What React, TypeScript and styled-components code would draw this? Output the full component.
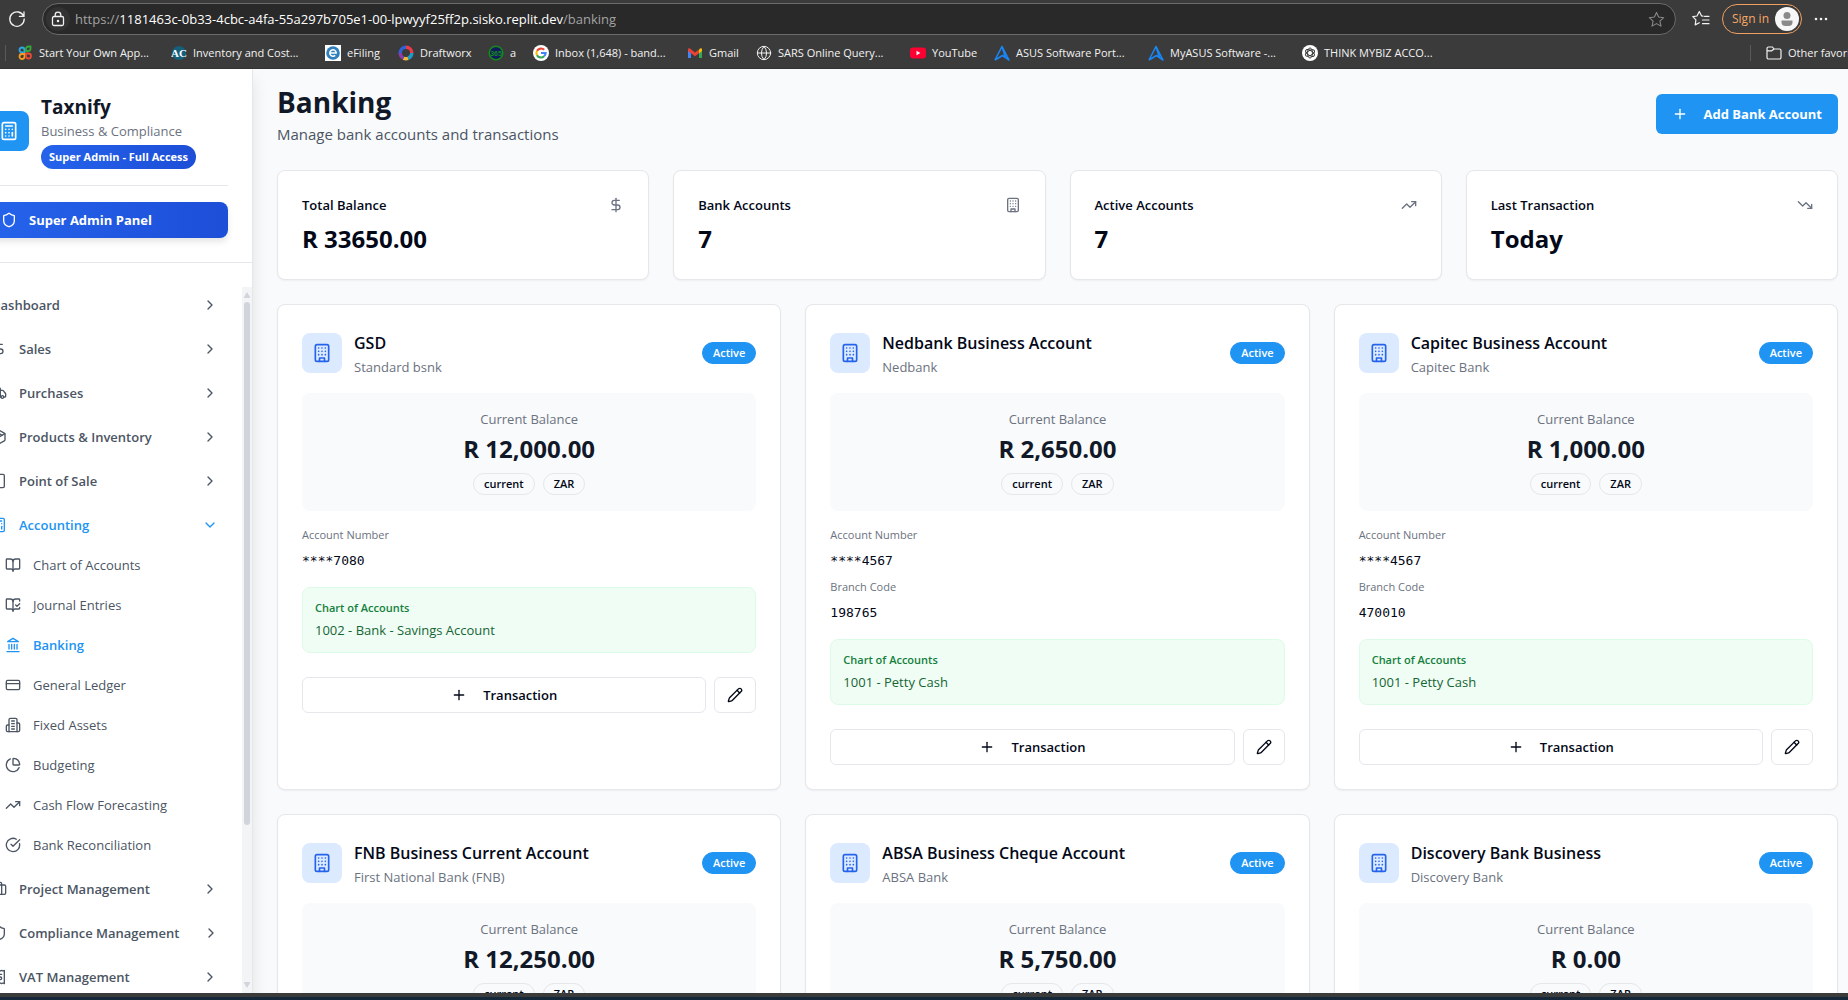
import React from "react";
import styled, { createGlobalStyle, css } from "styled-components";
import {
  BookOpen, BookOpenCheck, Briefcase, Calculator, ChevronDown, ChevronRight, CircleCheckBig,
  CreditCard, DollarSign, Globe, Package, Pencil, PieChart, Plus, Receipt, Shield, Tablet,
  TrendingDown, TrendingUp, Truck,
} from "lucide-react";

const sans = `"Segoe UI", "Open Sans", "Noto Sans", sans-serif`;
const mono = `Consolas, "DejaVu Sans Mono", monospace`;

const GlobalStyle = createGlobalStyle`
  *, *::before, *::after { box-sizing: border-box; }
  html, body { margin: 0; height: 100%; overflow: hidden; }
  #root { height: 100%; }
  body { font-family: ${sans}; font-size: 13px; line-height: 20px; color: #020817; background: #f9fafc; }
  h1, h2, h3, p, ul, dl, dd { margin: 0; padding: 0; }
  ul { list-style: none; }
  button, input { font: inherit; color: inherit; }
  button { cursor: pointer; }
  a { color: inherit; text-decoration: none; }
  svg { flex: none; display: block; }
`;

/* ---------- Browser chrome ---------- */

const Window = styled.div`
  display: flex;
  flex-direction: column;
  height: 100vh;
`;

const Chrome = styled.header`
  flex: none;
  display: flex;
  flex-direction: column;
  background: #3b3b3b;
  color: #f2f2f2;
  border-bottom: 1px solid #333;
`;

const AddressRow = styled.div`
  display: flex;
  align-items: center;
  height: 38px;
  padding: 0 20px 0 8px;
`;

const ChromeButton = styled.button`
  display: flex;
  padding: 0;
  border: 0;
  background: none;
  color: #f2f2f2;
`;

const AddressBar = styled.div`
  flex: 1;
  display: flex;
  align-items: center;
  gap: 5px;
  height: 32px;
  margin: 0 16px;
  padding: 0 10px 0 3px;
  border: 1px solid #6b6b6b;
  border-radius: 16px;
  background: #292929;
  color: #8a8a8a;
`;

const LockBadge = styled.span`
  display: flex;
  align-items: center;
  justify-content: center;
  width: 24px;
  height: 24px;
  border-radius: 12px;
  background: #333;
  color: #f2f2f2;
`;

const Url = styled.a`
  flex: 1;
  font-size: 13px;
  color: #a3a3a3;
  white-space: nowrap;
`;

const Host = styled.span`
  color: #fff;
`;

const SignIn = styled.button`
  display: flex;
  align-items: center;
  gap: 6px;
  height: 30px;
  margin: 0 12px 0 12px;
  padding: 0 2px 0 9px;
  border: 1px solid #f0a060;
  border-radius: 15px;
  background: none;
  color: #f5a768;
  font-size: 12px;
`;

const Bookmarks = styled.nav`
  display: flex;
  align-items: center;
  height: 30px;
  padding: 0 0 0 5px;
  font-size: 11px;
  white-space: nowrap;
`;

const Rule = styled.span`
  width: 1px;
  height: 16px;
  background: #5a5a5a;
`;

const Bookmark = styled.a<{ $width?: number }>`
  flex: none;
  display: flex;
  align-items: center;
  gap: 6px;
  width: ${(p) => (p.$width ? `${p.$width}px` : "auto")};
`;

const BookmarkSpacer = styled.span`
  width: 11px;
`;

const OtherFavorites = styled(Bookmark)`
  width: 82px;
  margin-left: 15px;
  overflow: hidden;
`;

const Fill = styled.span`
  flex: 1;
`;

/* ---------- Page shell ---------- */

const Page = styled.div`
  flex: 1;
  min-height: 0;
  display: flex;
  overflow: hidden;
`;

const Taskbar = styled.footer`
  flex: none;
  height: 7px;
  background: #14283a;
  border-top: 4px solid #3b3b3b;
`;

const Sidebar = styled.aside`
  flex: none;
  display: flex;
  flex-direction: column;
  width: 288px;
  margin-left: -35px;
  border-right: 1px solid #e5e7eb;
  background: #fff;
  box-shadow: 0 10px 15px rgba(0, 0, 0, 0.1);
`;

const SidebarTop = styled.div`
  flex: none;
  padding: 24px;
  border-bottom: 1px solid #e5e7eb;
`;

const Brand = styled.div`
  display: flex;
  align-items: center;
  gap: 12px;
  padding-bottom: 16px;
  border-bottom: 1px solid #e5e7eb;
`;

const BrandTile = styled.span`
  display: flex;
  align-items: center;
  justify-content: center;
  width: 40px;
  height: 40px;
  border-radius: 8px;
  background: #2094f3;
  color: #fff;
`;

const BrandBody = styled.div`
  display: flex;
  flex-direction: column;
  align-items: flex-start;
`;

const BrandName = styled.h2`
  font-size: 19px;
  line-height: 28px;
  font-weight: 700;
  color: #111827;
`;

const BrandText = styled.p`
  color: #6b7280;
`;

const RoleBadge = styled.span`
  margin-top: 4px;
  padding: 4px 8px;
  border-radius: 12px;
  background: linear-gradient(90deg, #2563eb, #1d4ed8);
  color: #fff;
  font-size: 11px;
  line-height: 16px;
  font-weight: 700;
`;

const AdminButton = styled.button`
  display: flex;
  align-items: center;
  gap: 12px;
  width: 100%;
  height: 36px;
  margin-top: 16px;
  padding: 0 12px;
  border: 0;
  border-radius: 8px;
  background: linear-gradient(90deg, #2563eb, #1d4ed8);
  box-shadow: 0 4px 6px rgba(0, 0, 0, 0.1);
  color: #fff;
  font-weight: 700;
`;

const NavScroll = styled.div`
  flex: 1;
  min-height: 0;
  display: flex;
  margin-top: 24px;
`;

const Nav = styled.nav`
  flex: 1;
  display: flex;
  flex-direction: column;
  gap: 8px;
  padding: 0 12px 0 14px;
  overflow: hidden;
`;

const row = css<{ $active?: boolean }>`
  display: flex;
  align-items: center;
  gap: 12px;
  flex: none;
  width: 100%;
  height: 36px;
  border: 0;
  background: none;
  text-align: left;
  white-space: nowrap;
  color: ${(p) => (p.$active ? "#2094f3" : "#4b5563")};
`;

const GroupButton = styled.button<{ $active?: boolean }>`
  ${row}
  padding: 0 12px;
  font-weight: 600;
`;

const SubList = styled.ul`
  display: flex;
  flex-direction: column;
  gap: 4px;
  margin-top: 4px;
`;

const SubLink = styled.a<{ $active?: boolean }>`
  ${row}
  padding: 0 12px 0 26px;
  font-weight: ${(p) => (p.$active ? 600 : 400)};
`;

const ScrollTrack = styled.div`
  flex: none;
  display: flex;
  flex-direction: column;
  align-items: center;
  gap: 4px;
  width: 10px;
  padding: 5px 0;
  background: #f3f4f6;
  color: #d1d5db;
`;

const ScrollThumb = styled.span`
  flex: 526 0 0;
  width: 6px;
  border-radius: 3px;
  background: #d1d5db;
`;

const ScrollRest = styled.span`
  flex: 150 0 0;
`;

/* ---------- Main content ---------- */

const Main = styled.main`
  flex: 1;
  min-width: 0;
  display: flex;
  flex-direction: column;
  gap: 24px;
  padding: 13px 10px 0 24px;
  overflow: hidden;
`;

const PageHeader = styled.div`
  display: flex;
  align-items: center;
  justify-content: space-between;
`;

const PageTitle = styled.h1`
  font-size: 28px;
  line-height: 40px;
  font-weight: 700;
  color: #111827;
`;

const PageText = styled.p`
  font-size: 15px;
  line-height: 24px;
  color: #4b5563;
`;

const AddButton = styled.button`
  display: flex;
  align-items: center;
  gap: 16px;
  height: 40px;
  padding: 0 16px;
  border: 0;
  border-radius: 6px;
  background: #2094f3;
  color: #fff;
  font-weight: 700;
`;

const StatGrid = styled.section`
  flex: none;
  display: grid;
  grid-template-columns: repeat(4, 1fr);
  gap: 24px;
`;

const card = css`
  border: 1px solid #e5e7eb;
  border-radius: 8px;
  background: #fff;
  box-shadow: 0 1px 2px rgba(0, 0, 0, 0.05);
`;

const StatCard = styled.article`
  ${card}
  padding: 24px;
`;

const StatHead = styled.div`
  display: flex;
  align-items: center;
  justify-content: space-between;
  color: #6b7280;
`;

const StatLabel = styled.h3`
  font-size: 13px;
  line-height: 20px;
  font-weight: 600;
  color: #020817;
`;

const StatValue = styled.p`
  margin-top: 8px;
  font-size: 24px;
  line-height: 32px;
  font-weight: 700;
`;

const AccountGrid = styled.section`
  flex: none;
  display: grid;
  grid-template-columns: repeat(3, 1fr);
  gap: 24px;
`;

const AccountCard = styled.article`
  ${card}
  display: flex;
  flex-direction: column;
  gap: 16px;
  padding: 24px;
`;

const AccountHead = styled.div`
  display: flex;
  align-items: center;
  gap: 12px;
`;

const AccountTile = styled.span`
  display: flex;
  align-items: center;
  justify-content: center;
  width: 40px;
  height: 40px;
  border-radius: 8px;
  background: #dbeafe;
  color: #2563eb;
`;

const AccountNames = styled.div`
  flex: 1;
  min-width: 0;
`;

const AccountName = styled.h3`
  font-size: 16px;
  line-height: 28px;
  font-weight: 600;
`;

const Muted = styled.p`
  color: #6b7280;
`;

const Pill = styled.span<{ $solid?: boolean }>`
  padding: 2px 10px;
  border: 1px solid ${(p) => (p.$solid ? "#2094f3" : "#e5e7eb")};
  border-radius: 11px;
  background: ${(p) => (p.$solid ? "#2094f3" : "transparent")};
  color: ${(p) => (p.$solid ? "#fff" : "#020817")};
  font-size: 11px;
  line-height: 16px;
  font-weight: 600;
`;

const BalanceBox = styled.div`
  display: flex;
  flex-direction: column;
  align-items: center;
  padding: 16px;
  border-radius: 8px;
  background: #f9fafb;
`;

const Balance = styled.p`
  margin-top: 4px;
  font-size: 24px;
  line-height: 32px;
  font-weight: 700;
  color: #111827;
`;

const Pills = styled.div`
  display: flex;
  gap: 8px;
  margin-top: 8px;
`;

const Details = styled.dl`
  display: flex;
  flex-direction: column;
  gap: 8px;
`;

const Term = styled.dt`
  font-size: 11px;
  line-height: 16px;
  color: #6b7280;
`;

const Code = styled.dd`
  font-family: ${mono};
  font-size: 13px;
  line-height: 20px;
`;

const LedgerBox = styled.div`
  display: flex;
  flex-direction: column;
  gap: 4px;
  padding: 12px;
  border: 1px solid #dcfce7;
  border-radius: 8px;
  background: #f0fdf4;
`;

const LedgerTitle = styled.p`
  font-size: 11px;
  line-height: 16px;
  font-weight: 600;
  color: #15803d;
`;

const LedgerText = styled.p`
  color: #166534;
`;

const Actions = styled.div`
  display: flex;
  gap: 8px;
  margin-top: 8px;
`;

const OutlineButton = styled.button<{ $grow?: boolean }>`
  flex: ${(p) => (p.$grow ? "1" : "none")};
  display: flex;
  align-items: center;
  justify-content: center;
  gap: 16px;
  height: 36px;
  padding: 0 12px;
  border: 1px solid #e5e7eb;
  border-radius: 6px;
  background: #fff;
  font-weight: 600;
`;

/* ---------- Drawings ---------- */

const Stroke = ({ size = 16, children }: { size?: number; children: React.ReactNode }) => (
  <svg width={size} height={size} viewBox="0 0 24 24" fill="none" stroke="currentColor" strokeWidth="2"
    strokeLinecap="round" strokeLinejoin="round" aria-hidden="true">{children}</svg>
);

const BuildingIcon = ({ size = 16 }: { size?: number }) => (
  <Stroke size={size}>
    <rect x="4" y="2" width="16" height="20" rx="2" />
    <path d="M9 22v-4h6v4M8 6h.01M16 6h.01M12 6h.01M12 10h.01M12 14h.01M16 10h.01M16 14h.01M8 10h.01M8 14h.01" />
  </Stroke>
);

const OfficeIcon = () => (
  <Stroke>
    <path d="M6 22V4a2 2 0 0 1 2-2h8a2 2 0 0 1 2 2v18Z" />
    <path d="M6 12H4a2 2 0 0 0-2 2v6a2 2 0 0 0 2 2h2M18 9h2a2 2 0 0 1 2 2v9a2 2 0 0 1-2 2h-2M10 6h4M10 10h4M10 14h4M10 18h4" />
  </Stroke>
);

const LandmarkIcon = () => (
  <Stroke>
    <path d="M3 22h18M6 18v-7M10 18v-7M14 18v-7M18 18v-7M12 2l8 5H4z" />
  </Stroke>
);

const ReloadIcon = () => (
  <svg width="18" height="18" viewBox="0 0 18 18" fill="none" stroke="currentColor" strokeWidth="1.3" strokeLinecap="round" aria-hidden="true">
    <path d="M15.6 6.2A7.2 7.2 0 1 0 16.2 9M16 1.8v4.6h-4.6" />
  </svg>
);

const LockIcon = () => (
  <svg width="16" height="16" viewBox="0 0 16 16" fill="none" stroke="currentColor" strokeWidth="1.3" aria-hidden="true">
    <rect x="2.5" y="5.5" width="11" height="9" rx="1.5" />
    <path d="M5.2 5.5V4a2.8 2.8 0 0 1 5.6 0v1.5" />
    <circle cx="8" cy="10" r=".6" fill="currentColor" />
  </svg>
);

const StarIcon = () => (
  <svg width="17" height="17" viewBox="0 0 24 24" fill="none" stroke="currentColor" strokeWidth="1.5" strokeLinejoin="round" aria-hidden="true">
    <path d="m12 2 3 6.600 7.200.8-5.400 4.900 1.500 7.100L12 17.800l-6.300 3.600 1.500-7.100L1.800 9.400 9 8.600z" />
  </svg>
);

const FavoritesIcon = () => (
  <svg width="18" height="18" viewBox="0 0 18 18" fill="none" stroke="currentColor" strokeWidth="1.2" strokeLinejoin="round" strokeLinecap="round" aria-hidden="true">
    <path d="M11 6.200 9.600 6 7.300 1.500 5 6 .8 6.700l3.100 3.200-.7 5 4.100-2.200M12.500 6.300h4.500M10.500 10h6.500M10.500 13.700h6.500" />
  </svg>
);

const AvatarIcon = () => (
  <svg width="24" height="24" viewBox="0 0 24 24" aria-hidden="true">
    <circle cx="12" cy="12" r="12" fill="#f7f7f7" />
    <circle cx="12" cy="8.500" r="3.500" fill="#8a8a8a" />
    <path d="M6.500 13.500h11v1.500a4 4 0 0 1-4 4h-3a4 4 0 0 1-4-4z" fill="#8a8a8a" />
  </svg>
);

const DotsIcon = () => (
  <svg width="14" height="4" viewBox="0 0 14 4" fill="currentColor" aria-hidden="true">
    <circle cx="2" cy="2" r="1.300" /><circle cx="7" cy="2" r="1.300" /><circle cx="12" cy="2" r="1.300" />
  </svg>
);

const FolderIcon = () => (
  <svg width="16" height="16" viewBox="0 0 16 16" fill="none" stroke="currentColor" strokeWidth="1.200" strokeLinejoin="round" aria-hidden="true">
    <path d="M1 4.500v8A1.500 1.500 0 0 0 2.500 14h11a1.500 1.500 0 0 0 1.500-1.500v-7A1.500 1.500 0 0 0 13.500 4H8L6.500 2h-4A1.500 1.500 0 0 0 1 3.500zM1 5.800h4.800L8 4" />
  </svg>
);

const Fav = ({ children }: { children: React.ReactNode }) => (
  <svg width="16" height="16" viewBox="0 0 16 16" aria-hidden="true">{children}</svg>
);

const CloverFav = () => (
  <Fav>
    <g fill="none" strokeWidth="1.800">
      <path d="M7.500 7.500H5A2.500 2.500 0 1 1 7.500 5z" stroke="#2da8e0" />
      <path d="M9 6V4A2.500 2.500 0 0 1 11.500 1.500H13.500v2A2.500 2.500 0 0 1 11 6z" stroke="#35a835" />
      <path d="M7.500 9v2.500A2.500 2.500 0 1 1 5 9z" stroke="#f39a1f" />
      <path d="M9 8.500h2.500A2.500 2.500 0 1 1 9 11z" stroke="#ea4b35" />
    </g>
  </Fav>
);

const AcFav = () => (
  <Fav>
    <circle cx="8" cy="8" r="7" fill="#14607c" />
    <text x="8" y="12" textAnchor="middle" fontFamily="Liberation Serif, serif" fontWeight="700" fontSize="11" fill="#fff">AC</text>
  </Fav>
);

const EFilingFav = () => (
  <Fav>
    <rect width="16" height="16" fill="#fff" />
    <circle cx="8" cy="8" r="6.800" fill="#2f80bd" />
    <path d="M4.800 8h6.400a3.200 3.200 0 1 0-1 2.400" fill="none" stroke="#fff" strokeWidth="1.500" />
  </Fav>
);

const RingFav = () => (
  <Fav>
    <g fill="none" strokeWidth="3.400">
      <path d="M8 2.200A5.800 5.800 0 0 1 13.800 8" stroke="#ee3b4b" />
      <path d="M13.800 8A5.800 5.800 0 0 1 10 13.400" stroke="#1b9dc8" />
      <path d="M10 13.400A5.800 5.800 0 0 1 5.500 13.200" stroke="#f6b93b" />
      <path d="M5.500 13.200A5.800 5.800 0 0 1 2.200 8" stroke="#8a3fa8" />
      <path d="M2.200 8A5.800 5.800 0 0 1 8 2.200" stroke="#2f62d9" />
    </g>
  </Fav>
);

const S365Fav = () => (
  <Fav>
    <circle cx="8" cy="8" r="6.800" fill="#101a5c" stroke="#138a1c" strokeWidth="1.500" />
    <text x="8" y="11" textAnchor="middle" fontFamily="Liberation Sans, sans-serif" fontWeight="700" fontSize="7" fill="#138a1c">365</text>
  </Fav>
);

const GoogleFav = () => (
  <Fav>
    <circle cx="8" cy="8" r="8" fill="#fff" />
    <g fill="none" strokeWidth="2.200">
      <path d="M11.200 4.800A4.600 4.600 0 0 0 4 5.800" stroke="#ea4335" />
      <path d="M4 5.800a4.600 4.600 0 0 0 0 4.400" stroke="#fbbc05" />
      <path d="M4 10.200a4.600 4.600 0 0 0 7.100 1.100" stroke="#34a853" />
      <path d="M11.100 11.300A4.600 4.600 0 0 0 12.600 8H8" stroke="#4285f4" />
    </g>
  </Fav>
);

const GmailFav = () => (
  <Fav>
    <path d="M1 4v9h3V7z" fill="#4285f4" />
    <path d="M15 4v9h-3V7z" fill="#34a853" />
    <path d="M12 4.500 13 3.500q2-.8 2 1V6l-3 2.300z" fill="#fbbc04" />
    <path d="M1 6V4.500q0-1.800 2-1l5 4 4-3v3.800l-4 3z" fill="#ea4335" />
  </Fav>
);

const YouTubeFav = () => (
  <Fav>
    <rect y="2.500" width="16" height="11" rx="3" fill="#ff0033" />
    <path d="M6.500 5.800v4.400L10.300 8z" fill="#fff" />
  </Fav>
);

const AsusFav = () => (
  <Fav>
    <path d="M1 15 8 1.500 15 15 8.500 10.500 1 15M8 1.500l3.500 11" fill="none" stroke="#1a86f5" strokeWidth="1.600" strokeLinejoin="round" />
  </Fav>
);

const KnotFav = () => (
  <Fav>
    <circle cx="8" cy="8" r="8" fill="#fff" />
    <g fill="none" stroke="#333" strokeWidth=".9">
      <ellipse cx="8" cy="8" rx="2.400" ry="5" />
      <ellipse cx="8" cy="8" rx="2.400" ry="5" transform="rotate(60 8 8)" />
      <ellipse cx="8" cy="8" rx="2.400" ry="5" transform="rotate(120 8 8)" />
    </g>
  </Fav>
);

/* ---------- Data ---------- */

const bookmarks: { label: string; icon: React.ReactNode; width: number }[] = [
  { label: "Start Your Own App...", icon: <CloverFav />, width: 154 },
  { label: "Inventory and Cost...", icon: <AcFav />, width: 154 },
  { label: "eFiling", icon: <EFilingFav />, width: 73 },
  { label: "Draftworx", icon: <RingFav />, width: 90 },
  { label: "a", icon: <S365Fav />, width: 45 },
  { label: "Inbox (1,648) - band...", icon: <GoogleFav />, width: 154 },
  { label: "Gmail", icon: <GmailFav />, width: 69 },
  { label: "SARS Online Query...", icon: <Globe size={16} strokeWidth={1.5} />, width: 154 },
  { label: "YouTube", icon: <YouTubeFav />, width: 84 },
  { label: "ASUS Software Port...", icon: <AsusFav />, width: 154 },
  { label: "MyASUS Software -...", icon: <AsusFav />, width: 154 },
  { label: "THINK MYBIZ ACCO...", icon: <KnotFav />, width: 154 },
];

type Group = { label: string; icon?: React.ReactNode; open?: boolean };

const groups: Group[] = [
  { label: "Dashboard" },
  { label: "Sales", icon: <DollarSign size={16} /> },
  { label: "Purchases", icon: <Truck size={16} /> },
  { label: "Products & Inventory", icon: <Package size={16} /> },
  { label: "Point of Sale", icon: <Tablet size={16} /> },
  { label: "Accounting", icon: <Calculator size={16} />, open: true },
  { label: "Project Management", icon: <Briefcase size={16} /> },
  { label: "Compliance Management", icon: <Shield size={16} /> },
  { label: "VAT Management", icon: <Receipt size={16} /> },
];

const accountingLinks = [
  { label: "Chart of Accounts", icon: <BookOpen size={16} /> },
  { label: "Journal Entries", icon: <BookOpenCheck size={16} /> },
  { label: "Banking", icon: <LandmarkIcon />, active: true },
  { label: "General Ledger", icon: <CreditCard size={16} /> },
  { label: "Fixed Assets", icon: <OfficeIcon /> },
  { label: "Budgeting", icon: <PieChart size={16} /> },
  { label: "Cash Flow Forecasting", icon: <TrendingUp size={16} /> },
  { label: "Bank Reconciliation", icon: <CircleCheckBig size={16} /> },
];

const stats = [
  { label: "Total Balance", value: "R 33650.00", icon: <DollarSign size={16} /> },
  { label: "Bank Accounts", value: "7", icon: <BuildingIcon /> },
  { label: "Active Accounts", value: "7", icon: <TrendingUp size={16} /> },
  { label: "Last Transaction", value: "Today", icon: <TrendingDown size={16} /> },
];

type Account = { name: string; bank: string; balance: string; number: string; branch?: string; ledger: string };

const accounts: Account[] = [
  { name: "GSD", bank: "Standard bsnk", balance: "R 12,000.00", number: "****7080", ledger: "1002 - Bank - Savings Account" },
  { name: "Nedbank Business Account", bank: "Nedbank", balance: "R 2,650.00", number: "****4567", branch: "198765", ledger: "1001 - Petty Cash" },
  { name: "Capitec Business Account", bank: "Capitec Bank", balance: "R 1,000.00", number: "****4567", branch: "470010", ledger: "1001 - Petty Cash" },
  { name: "FNB Business Current Account", bank: "First National Bank (FNB)", balance: "R 12,250.00", number: "****4567", ledger: "1001 - Petty Cash" },
  { name: "ABSA Business Cheque Account", bank: "ABSA Bank", balance: "R 5,750.00", number: "****4567", ledger: "1001 - Petty Cash" },
  { name: "Discovery Bank Business", bank: "Discovery Bank", balance: "R 0.00", number: "****4567", ledger: "1001 - Petty Cash" },
];

/* ---------- Views ---------- */

const BrowserBar = () => (
  <Chrome>
    <AddressRow>
      <ChromeButton aria-label="Refresh"><ReloadIcon /></ChromeButton>
      <AddressBar>
        <LockBadge><LockIcon /></LockBadge>
        <Url href="#">https://<Host>1181463c-0b33-4cbc-a4fa-55a297b705e1-00-lpwyyf25ff2p.sisko.replit.dev</Host>/banking</Url>
        <StarIcon />
      </AddressBar>
      <ChromeButton aria-label="Favorites"><FavoritesIcon /></ChromeButton>
      <SignIn>Sign in<AvatarIcon /></SignIn>
      <ChromeButton aria-label="Settings and more"><DotsIcon /></ChromeButton>
    </AddressRow>
    <Bookmarks aria-label="Bookmarks">
      <Rule />
      <BookmarkSpacer />
      {bookmarks.map((b) => (
        <Bookmark key={b.label} href="#" $width={b.width}>{b.icon}{b.label}</Bookmark>
      ))}
      <Fill />
      <Rule />
      <OtherFavorites href="#"><FolderIcon />Other favorites</OtherFavorites>
    </Bookmarks>
  </Chrome>
);

const SideNav = () => (
  <Sidebar>
    <SidebarTop>
      <Brand>
        <BrandTile><Calculator size={20} /></BrandTile>
        <BrandBody>
          <BrandName>Taxnify</BrandName>
          <BrandText>Business &amp; Compliance</BrandText>
          <RoleBadge>Super Admin - Full Access</RoleBadge>
        </BrandBody>
      </Brand>
      <AdminButton><Shield size={16} />Super Admin Panel</AdminButton>
    </SidebarTop>
    <NavScroll>
      <Nav aria-label="Main">
        {groups.map((g) => (
          <div key={g.label}>
            <GroupButton $active={g.open} aria-expanded={!!g.open}>
              {g.icon}
              {g.label}
              <Fill />
              {g.open ? <ChevronDown size={16} /> : <ChevronRight size={16} />}
            </GroupButton>
            {g.open && (
              <SubList>
                {accountingLinks.map((l) => (
                  <li key={l.label}><SubLink href="#" $active={l.active}>{l.icon}{l.label}</SubLink></li>
                ))}
              </SubList>
            )}
          </div>
        ))}
      </Nav>
      <ScrollTrack aria-hidden="true">
        <svg width="6" height="6" viewBox="0 0 6 6" fill="currentColor"><path d="M3 0l3 5v1H0V5z" /></svg>
        <ScrollThumb />
        <ScrollRest />
        <svg width="6" height="6" viewBox="0 0 6 6" fill="currentColor"><path d="M3 6l3-5V0H0v1z" /></svg>
      </ScrollTrack>
    </NavScroll>
  </Sidebar>
);

const AccountView = ({ account }: { account: Account }) => (
  <AccountCard>
    <AccountHead>
      <AccountTile><BuildingIcon size={20} /></AccountTile>
      <AccountNames>
        <AccountName>{account.name}</AccountName>
        <Muted>{account.bank}</Muted>
      </AccountNames>
      <Pill $solid>Active</Pill>
    </AccountHead>
    <BalanceBox>
      <Muted>Current Balance</Muted>
      <Balance>{account.balance}</Balance>
      <Pills><Pill>current</Pill><Pill>ZAR</Pill></Pills>
    </BalanceBox>
    <Details>
      <Term>Account Number</Term>
      <Code>{account.number}</Code>
      {account.branch && <Term>Branch Code</Term>}
      {account.branch && <Code>{account.branch}</Code>}
    </Details>
    <LedgerBox>
      <LedgerTitle>Chart of Accounts</LedgerTitle>
      <LedgerText>{account.ledger}</LedgerText>
    </LedgerBox>
    <Actions>
      <OutlineButton $grow><Plus size={16} />Transaction</OutlineButton>
      <OutlineButton aria-label={`Edit ${account.name}`}><Pencil size={16} /></OutlineButton>
    </Actions>
  </AccountCard>
);

export default function App() {
  return (
    <Window>
      <GlobalStyle />
      <BrowserBar />
      <Page>
        <SideNav />
        <Main>
          <PageHeader>
            <div>
              <PageTitle>Banking</PageTitle>
              <PageText>Manage bank accounts and transactions</PageText>
            </div>
            <AddButton><Plus size={16} />Add Bank Account</AddButton>
          </PageHeader>
          <StatGrid>
            {stats.map((s) => (
              <StatCard key={s.label}>
                <StatHead><StatLabel>{s.label}</StatLabel>{s.icon}</StatHead>
                <StatValue>{s.value}</StatValue>
              </StatCard>
            ))}
          </StatGrid>
          <AccountGrid>
            {accounts.map((a) => <AccountView key={a.name} account={a} />)}
          </AccountGrid>
        </Main>
      </Page>
      <Taskbar />
    </Window>
  );
}
